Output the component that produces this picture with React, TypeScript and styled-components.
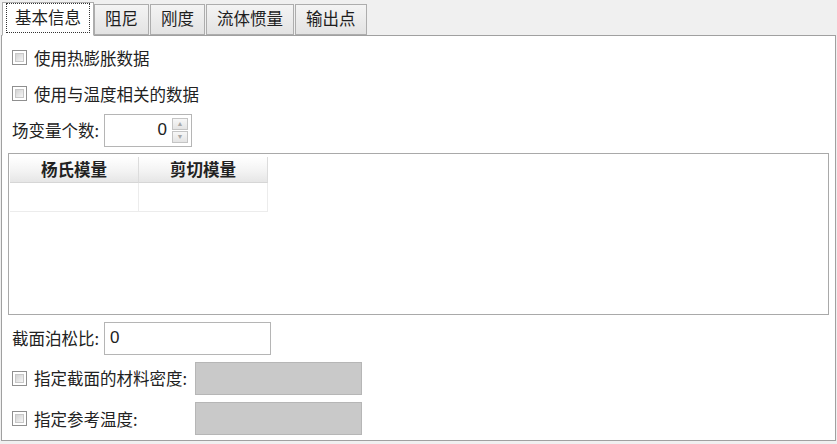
import React from "react";
import styled, { createGlobalStyle } from "styled-components";

const Global = createGlobalStyle`
  html, body { margin: 0; padding: 0; background: #f0f0f0; }
  body { font-family: "Noto Sans CJK SC", "Noto Sans", sans-serif; color: #222; }
  * { box-sizing: border-box; }
`;

const Window = styled.div`
  width: 837px;
  height: 444px;
  background: #f0f0f0;
  display: flex;
  flex-direction: column;
  overflow: hidden;
`;

const TabStrip = styled.div`
  display: flex;
  align-items: flex-end;
  height: 36px;
  padding-left: 2px;
  margin-bottom: -1px;
  position: relative;
  z-index: 1;
`;

const Tab = styled.div<{ $selected?: boolean }>`
  display: flex;
  align-items: center;
  justify-content: center;
  font-size: 16.5px;
  line-height: 1;
  color: #1e1e1e;
  border: 1px solid #adadad;
  ${(p) =>
    p.$selected
      ? `
    height: 34px;
    padding: 0 3px 2px 3px;
    background: #fff;
    border-bottom-color: #fff;
    margin-right: 0;
  `
      : `
    height: 31px;
    padding: 0 10px 2px 10px;
    margin-bottom: 1px;
    background: linear-gradient(#f4f4f4, #e3e3e3);
    margin-right: 1px;
  `}
`;

const Focus = styled.span`
  border: 1px dotted #333;
  padding: 5px 8px 6px 8px;
  line-height: 1;
`;

const Panel = styled.div`
  margin: 0 1px 3px 1px;
  height: 407px;
  background: #fff;
  border: 1px solid #a0a0a0;
  padding: 12px 6px 0 6px;
  display: flex;
  flex-direction: column;
`;

const Row = styled.div<{ $top: number; $h: number }>`
  display: flex;
  align-items: center;
  margin-top: ${(p) => p.$top}px;
  height: ${(p) => p.$h}px;
  font-size: 16.5px;
  color: #222;
  white-space: nowrap;
`;

const Check = styled.span`
  flex: none;
  width: 15px;
  height: 15px;
  margin-left: 4px;
  margin-right: 7px;
  border: 1px solid #8f8f8f;
  background: #fff;
  padding: 2px;
  display: flex;
  &::after {
    content: "";
    flex: 1;
    border: 1px solid #c8c8c8;
    background: linear-gradient(135deg, #d2d2d2, #f6f6f6);
  }
`;

const Label = styled.span<{ $w?: number; $left?: number }>`
  margin-left: ${(p) => p.$left ?? 0}px;
  width: ${(p) => (p.$w ? `${p.$w}px` : "auto")};
  flex: none;
`;

const Spin = styled.div`
  width: 88px;
  height: 33px;
  border: 1px solid #b5b5b5;
  display: flex;
  align-items: center;
  justify-content: flex-end;
  padding-right: 3px;
  gap: 5px;
  font-family: "Liberation Sans", "Noto Sans", sans-serif;
  font-size: 17px;
`;

const SpinButtons = styled.div`
  display: flex;
  flex-direction: column;
  gap: 1px;
`;

const SpinBtn = styled.div`
  width: 16px;
  height: 12px;
  border: 1px solid #c4c4c4;
  background: linear-gradient(#f7f7f7, #e4e4e4);
  display: flex;
  align-items: center;
  justify-content: center;
  color: #a8a8a8;
  font-size: 7px;
  line-height: 1;
`;

const Grid = styled.div`
  margin-top: 6px;
  height: 162px;
  border: 1px solid #a9a9a9;
  padding: 3px 0 0 1px;
  flex: none;
`;

const GridRow = styled.div`
  display: flex;
`;

const HeadCell = styled.div`
  width: 129px;
  height: 26px;
  display: flex;
  align-items: center;
  justify-content: center;
  font-size: 16.5px;
  font-weight: bold;
  color: #222;
  background: linear-gradient(#ffffff, #f2f2f2 60%, #e6e6e6);
  border-right: 1px solid #dcdcdc;
  border-bottom: 1px solid #d6d6d6;
`;

const BodyCell = styled.div`
  width: 129px;
  height: 29px;
  border-right: 1px solid #ececec;
  border-bottom: 1px solid #ececec;
`;

const TextBox = styled.div<{ $gray?: boolean }>`
  width: 167px;
  height: 33px;
  border: 1px solid ${(p) => (p.$gray ? "#b6b6b6" : "#b5b5b5")};
  background: ${(p) => (p.$gray ? "#c9c9c9" : "#fff")};
  display: flex;
  align-items: center;
  padding-left: 5px;
  font-family: "Liberation Sans", "Noto Sans", sans-serif;
  font-size: 17px;
  color: #222;
`;

export default function App() {
  const tabs = ["阻尼", "刚度", "流体惯量", "输出点"];
  return (
    <Window>
      <Global />
      <TabStrip>
        <Tab $selected>
          <Focus>基本信息</Focus>
        </Tab>
        {tabs.map((t) => (
          <Tab key={t}>{t}</Tab>
        ))}
      </TabStrip>
      <Panel>
        <Row $top={0} $h={20}>
          <Check />
          使用热膨胀数据
        </Row>
        <Row $top={16} $h={20}>
          <Check />
          使用与温度相关的数据
        </Row>
        <Row $top={10} $h={33}>
          <Label $w={92} $left={4}>场变量个数:</Label>
          <Spin>
            0
            <SpinButtons>
              <SpinBtn>▲</SpinBtn>
              <SpinBtn>▼</SpinBtn>
            </SpinButtons>
          </Spin>
        </Row>
        <Grid>
          <GridRow>
            <HeadCell>杨氏模量</HeadCell>
            <HeadCell>剪切模量</HeadCell>
          </GridRow>
          <GridRow>
            <BodyCell />
            <BodyCell />
          </GridRow>
        </Grid>
        <Row $top={7} $h={33}>
          <Label $w={92} $left={4}>截面泊松比:</Label>
          <TextBox>0</TextBox>
        </Row>
        <Row $top={7} $h={33}>
          <Check />
          <Label $w={161}>指定截面的材料密度:</Label>
          <TextBox $gray />
        </Row>
        <Row $top={7} $h={34}>
          <Check />
          <Label $w={161}>指定参考温度:</Label>
          <TextBox $gray />
        </Row>
      </Panel>
    </Window>
  );
}
